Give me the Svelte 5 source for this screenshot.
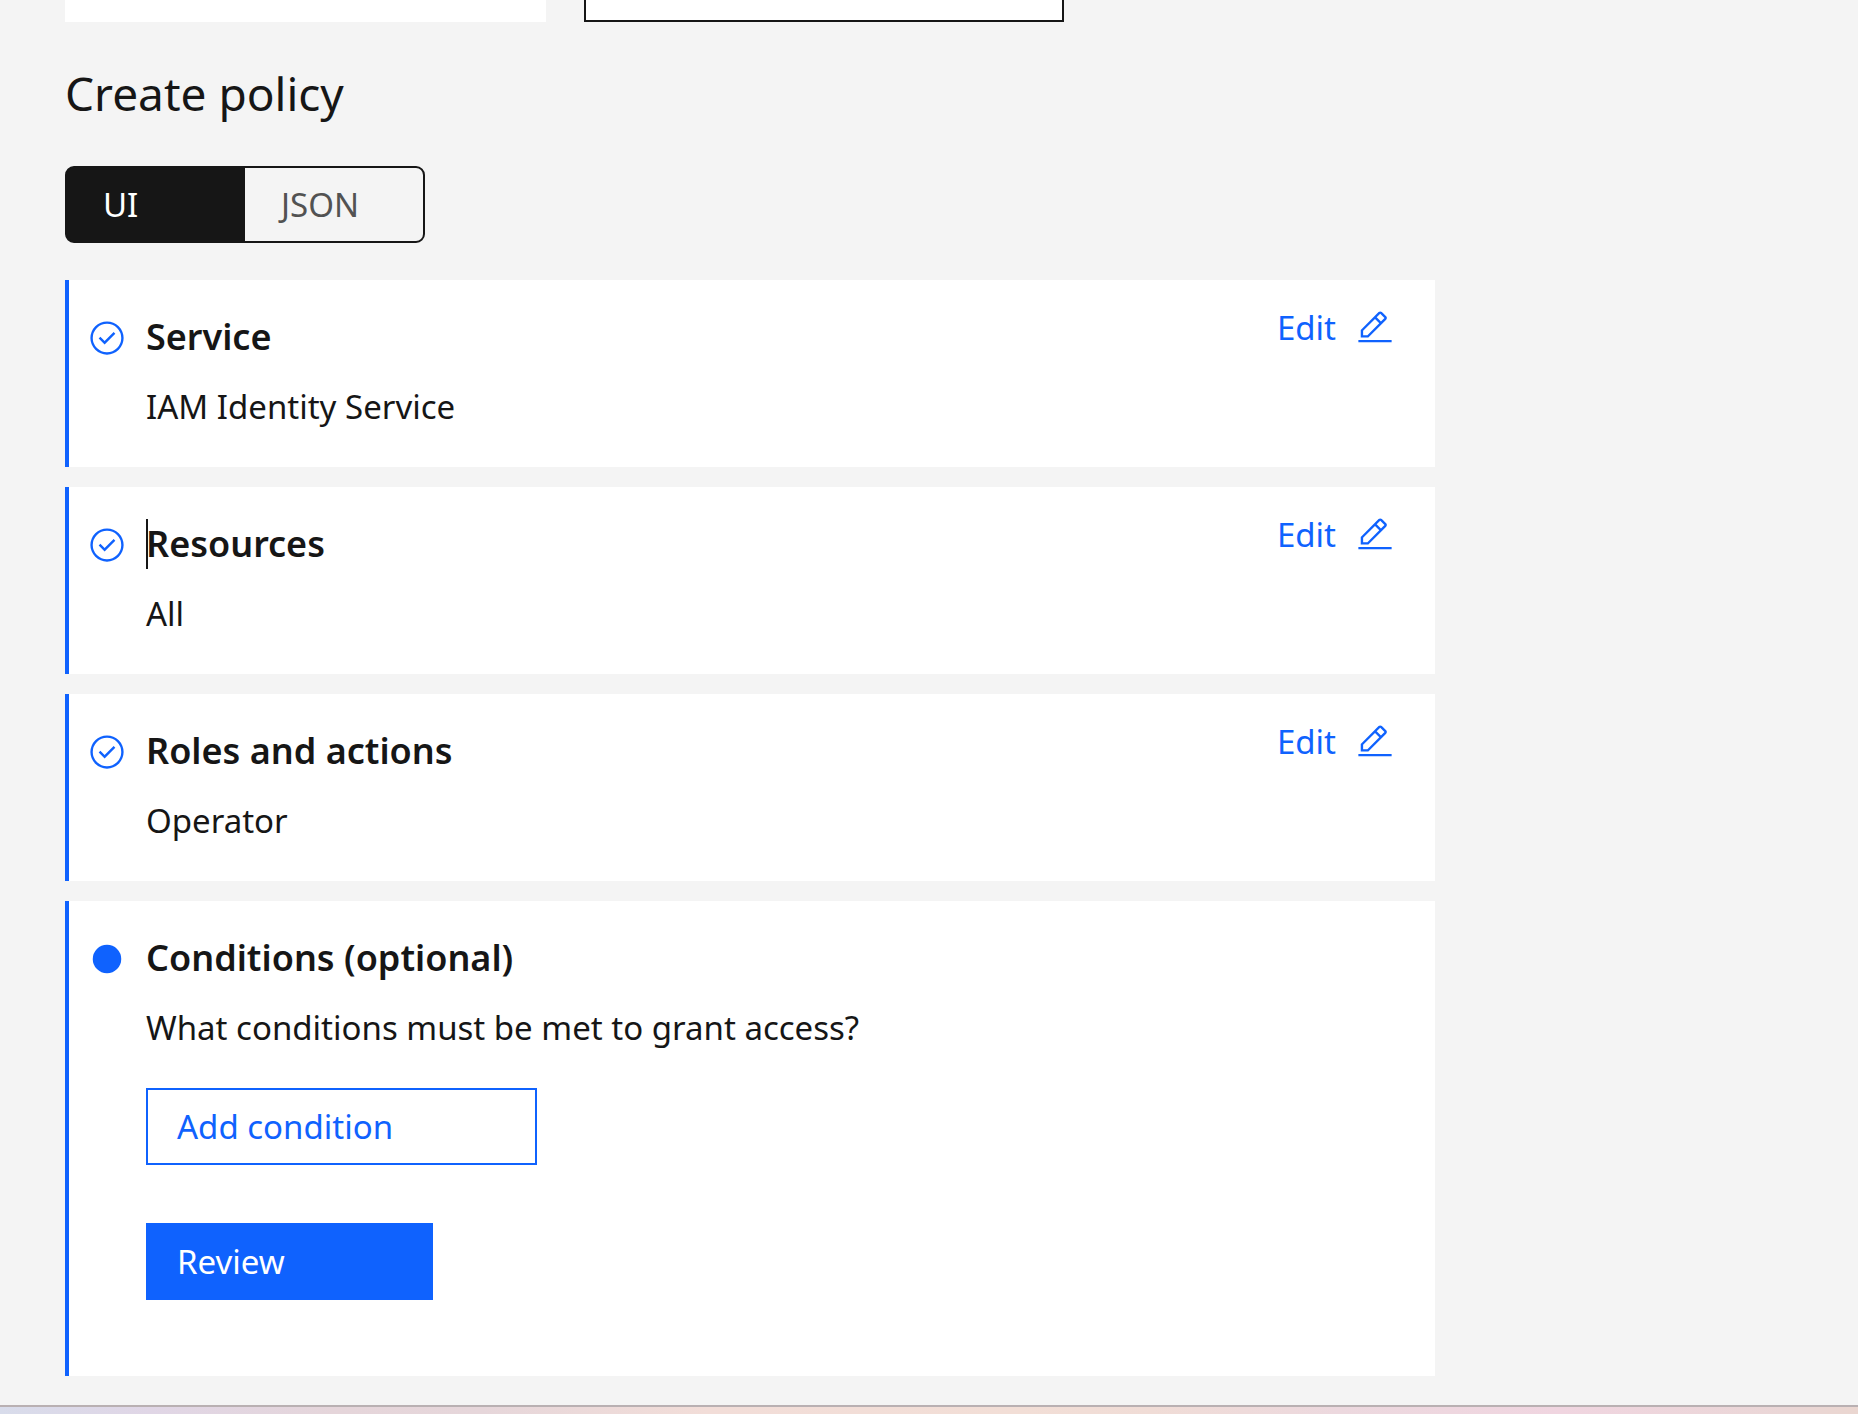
<script>
  const steps = [
    { title: 'Service', value: 'IAM Identity Service', caret: false },
    { title: 'Resources', value: 'All', caret: true },
    { title: 'Roles and actions', value: 'Operator', caret: false }
  ];
  const modes = ['UI', 'JSON'];
  let mode = $state('UI');
</script>

<div class="page">
  <main>
    <div class="tiles">
      <div class="tile"></div>
      <div class="tile selected"></div>
    </div>

    <h1>Create policy</h1>

    <div class="switcher" role="tablist" aria-label="Policy editor">
      {#each modes as name}
        <button
          type="button"
          role="tab"
          class:active={mode === name}
          aria-selected={mode === name}
          onclick={() => (mode = name)}>{name}</button>
      {/each}
    </div>

    <div class="steps">
      {#each steps as step}
        <section class="step">
          <svg class="icon status" viewBox="0 0 32 32" aria-hidden="true">
            <path d="M14 21.414l-5-5.001L10.413 15 14 18.586 21.585 11 23 12.415z" />
            <path d="M16 2a14 14 0 1 0 14 14A14 14 0 0 0 16 2zm0 26a12 12 0 1 1 12-12 12 12 0 0 1-12 12z" />
          </svg>
          <div class="body">
            <h2 class:caret={step.caret}>{step.title}</h2>
            <p>{step.value}</p>
          </div>
          <button type="button" class="edit" aria-label={'Edit ' + step.title}>
            Edit
            <svg class="icon" viewBox="0 0 32 32" aria-hidden="true">
              <path d="M2 26h28v2H2z" />
              <path d="M25.4 9c.8-.8.8-2 0-2.8l-3.6-3.6c-.8-.8-2-.8-2.8 0l-15 15V24h6.4l15-15zm-5-5L24 7.600l-3 3L17.400 7l3-3zM6 22v-3.600l10-10 3.600 3.600-10 10H6z" />
            </svg>
          </button>
        </section>
      {/each}

      <section class="step current">
        <svg class="icon status" viewBox="0 0 32 32" aria-hidden="true">
          <circle cx="16" cy="16" r="12" />
        </svg>
        <div class="body">
          <h2>Conditions (optional)</h2>
          <p>What conditions must be met to grant access?</p>
          <button type="button" class="action outline">Add condition</button>
          <button type="button" class="action primary">Review</button>
        </div>
      </section>
    </div>
  </main>
  <div class="edge"></div>
</div>

<style>
  :global(body) {
    margin: 0;
    background: #f4f4f4;
  }

  .page {
    --blue: #0f62fe;
    --ink: #161616;
    display: flex;
    flex-direction: column;
    min-height: 100vh;
    color: var(--ink);
    font-family: 'Noto Sans', 'Open Sans', sans-serif;
    font-size: 33px;
    line-height: 46px;
  }

  main {
    flex: 1;
    padding: 0 65px 29px;
  }

  button {
    margin: 0;
    font: inherit;
    text-align: left;
    cursor: pointer;
  }

  .tiles {
    display: grid;
    grid-template-columns: 1fr 1fr;
    gap: 38px;
    max-width: 999px;
  }

  .tile {
    box-sizing: border-box;
    height: 22px;
    background: #fff;
  }

  .tile.selected {
    border: 2px solid var(--ink);
    border-top: 0;
  }

  h1 {
    margin: 43px 0 45px;
    font-size: 46px;
    font-weight: 400;
    line-height: 56px;
  }

  .switcher {
    display: flex;
    box-sizing: border-box;
    max-width: 360px;
    height: 77px;
    border: 2px solid var(--ink);
    border-radius: 9px;
    background: var(--ink);
    overflow: hidden;
  }

  .switcher button {
    flex: 1;
    padding: 0 36px;
    border: 0;
    background: #f4f4f4;
    color: #525252;
  }

  .switcher button.active {
    background: var(--ink);
    color: #fff;
  }

  .steps {
    display: flex;
    flex-direction: column;
    gap: 20px;
    max-width: 1370px;
    margin-top: 37px;
  }

  .step {
    display: flex;
    align-items: flex-start;
    gap: 20px;
    padding: 0 41px 37px 19px;
    border-left: 4px solid var(--blue);
    background: #fff;
  }

  .step.current {
    padding-bottom: 76px;
  }

  .icon {
    flex: none;
    width: 38px;
    height: 38px;
    fill: var(--blue);
  }

  .status {
    margin-top: 39px;
  }

  .body {
    flex: 1;
    display: flex;
    flex-direction: column;
    align-items: flex-start;
    padding-top: 32px;
  }

  h2 {
    position: relative;
    margin: 0 0 22px;
    font-size: 36px;
    font-weight: 600;
    line-height: 50px;
  }

  .caret::before {
    content: '';
    position: absolute;
    top: 0;
    bottom: 0;
    left: 0;
    width: 2px;
    background: var(--ink);
  }

  p {
    margin: 0;
  }

  .edit {
    display: flex;
    align-items: center;
    gap: 20px;
    margin-top: 25px;
    padding: 0;
    border: 0;
    background: none;
    color: var(--blue);
  }

  .action {
    box-sizing: border-box;
    max-width: 100%;
    height: 77px;
    padding: 0 29px;
    border: 2px solid var(--blue);
  }

  .outline {
    width: 391px;
    margin-top: 37px;
    background: #fff;
    color: var(--blue);
  }

  .primary {
    width: 287px;
    margin-top: 58px;
    background: var(--blue);
    color: #fff;
  }

  .edge {
    height: 7px;
    border-top: 2px solid #b9b0b2;
    background: linear-gradient(
      90deg,
      #d8dceb 0%,
      #e0d6e6 8%,
      #e5d5da 18%,
      #e6d6da 26%,
      #f2ddd8 38%,
      #f2ded6 55%,
      #f0dcd6 62%,
      #ecd8de 72%,
      #f0d5e0 84%,
      #ead6d6 96%,
      #ead6d0 100%
    );
  }
</style>
